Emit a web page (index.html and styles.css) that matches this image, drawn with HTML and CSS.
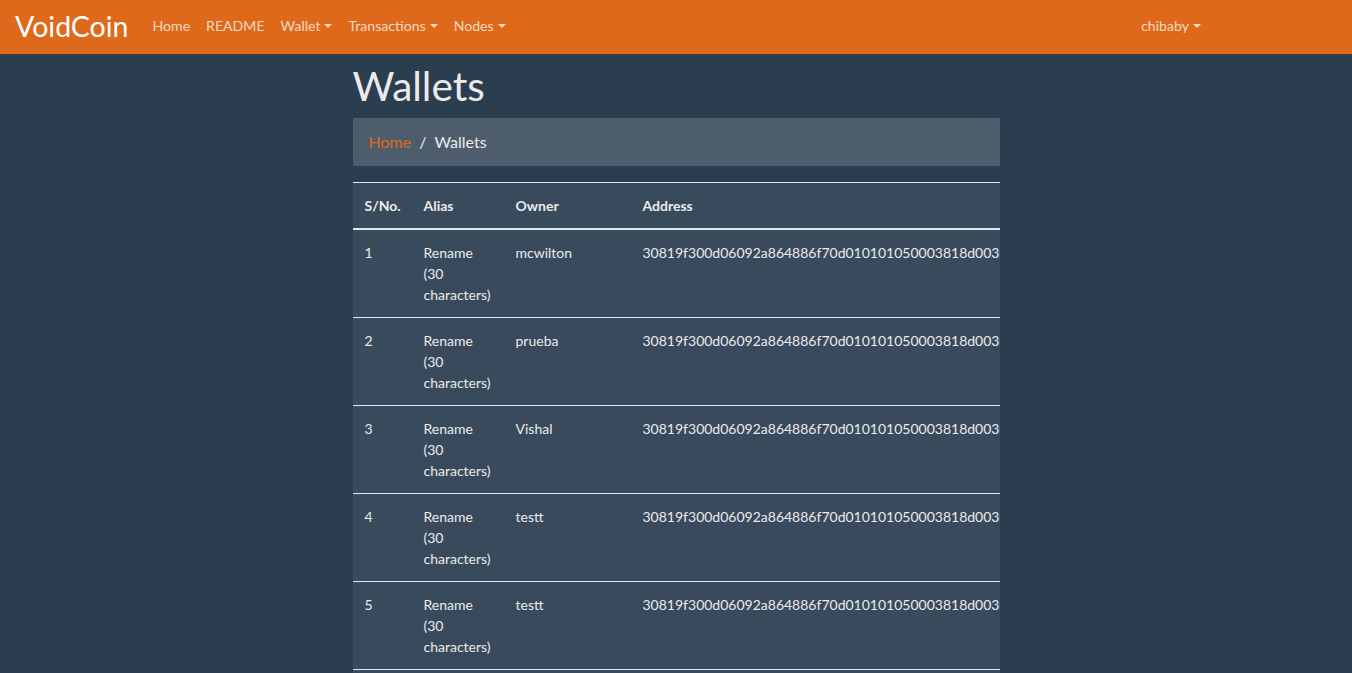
FILE: index.html
```html
<!DOCTYPE html>
<html lang="en">
<head>
<meta charset="utf-8">
<title>Wallets - VoidCoin</title>
<link rel="stylesheet" href="styles.css">
</head>
<body>
<nav class="navbar">
  <a class="brand" href="#">VoidCoin</a>
  <ul class="nav">
    <li><a href="#">Home</a></li>
    <li><a href="#">README</a></li>
    <li><a href="#" class="dropdown">Wallet</a></li>
    <li><a href="#" class="dropdown">Transactions</a></li>
    <li><a href="#" class="dropdown">Nodes</a></li>
  </ul>
  <ul class="nav nav-right">
    <li><a href="#" class="dropdown">chibaby</a></li>
  </ul>
</nav>
<main class="content">
  <h1 class="title">Wallets</h1>
  <ol class="breadcrumb">
    <li><a href="#">Home</a></li>
    <li class="active">Wallets</li>
  </ol>
  <div class="table-wrap">
    <table class="table">
      <thead>
        <tr><th class="c-no">S/No.</th><th class="c-alias">Alias</th><th class="c-owner">Owner</th><th class="c-addr">Address</th></tr>
      </thead>
      <tbody>
        <tr><td>1</td><td>Rename (30 characters)</td><td>mcwilton</td><td class="addr">30819f300d06092a864886f70d010101050003818d0030818902818100c5</td></tr>
        <tr><td>2</td><td>Rename (30 characters)</td><td>prueba</td><td class="addr">30819f300d06092a864886f70d010101050003818d0030818902818100c5</td></tr>
        <tr><td>3</td><td>Rename (30 characters)</td><td>Vishal</td><td class="addr">30819f300d06092a864886f70d010101050003818d0030818902818100c5</td></tr>
        <tr><td>4</td><td>Rename (30 characters)</td><td>testt</td><td class="addr">30819f300d06092a864886f70d010101050003818d0030818902818100c5</td></tr>
        <tr><td>5</td><td>Rename (30 characters)</td><td>testt</td><td class="addr">30819f300d06092a864886f70d010101050003818d0030818902818100c5</td></tr>
        <tr><td>6</td><td>Rename (30 characters)</td><td>testt</td><td class="addr">30819f300d06092a864886f70d010101050003818d0030818902818100c5</td></tr>
      </tbody>
    </table>
  </div>
</main>
</body>
</html>
```
FILE: styles.css
```css
html { overflow: hidden; }
* { box-sizing: border-box; }
body {
  margin: 0;
  background: #2B3E50;
  color: #EBEBEB;
  font-family: Lato, "Open Sans", sans-serif;
  font-size: 14px;
  line-height: 1.5;
}
a { text-decoration: none; }

.navbar {
  background: #DF691A;
  height: 54px;
  display: flex;
  align-items: center;
  padding: 0 16px 2px;
}
.brand {
  color: #fff;
  font-size: 28.5px;
  line-height: 1;
  margin-right: 16px;
  margin-left: -1px;
}
.nav {
  list-style: none;
  margin: 0;
  padding: 0;
  display: flex;
}
.nav a {
  display: block;
  padding: 8px;
  color: rgba(255,255,255,0.75);
  font-size: 14.1px;
}
.nav-right { margin-left: auto; margin-right: 127px; }
.dropdown::after {
  content: "";
  display: inline-block;
  margin-left: 4px;
  vertical-align: 3px;
  border-top: 4px solid;
  border-left: 4px solid transparent;
  border-right: 4px solid transparent;
}

.content {
  width: 647px;
  margin: 0 auto;
  padding-top: 8px;
}
.title {
  margin: 0 0 8px;
  font-size: 40.5px;
  font-weight: 400;
  line-height: 48px;
  color: #EBEBEB;
}
.breadcrumb {
  list-style: none;
  margin: 0 0 16px;
  padding: 12px 16px;
  background: #4E5D6C;
  display: flex;
  font-size: 16px;
  line-height: 24px;
}
.breadcrumb a { color: #DF691A; }
.breadcrumb li + li::before {
  content: "/";
  padding: 0 8px;
  color: #EBEBEB;
}
.breadcrumb .active { color: #EBEBEB; }

.table-wrap {
  overflow: hidden;
  background: #384A5C;
}
.table {
  border-collapse: collapse;
  table-layout: fixed;
  width: 1000px;
  background: #384A5C;
}
.table th, .table td {
  padding: 12px;
  text-align: left;
  vertical-align: top;
  border-top: 1px solid #E4E7EA;
}
.table th { font-weight: 700; color: #EBEBEB; }
.table thead th { border-bottom: 2px solid #E4E7EA; }
.table tbody tr:first-child td { border-top: 0; }
.c-no { width: 59px; }
.c-alias { width: 92px; }
.c-owner { width: 127px; }
.addr { white-space: nowrap; }
```
